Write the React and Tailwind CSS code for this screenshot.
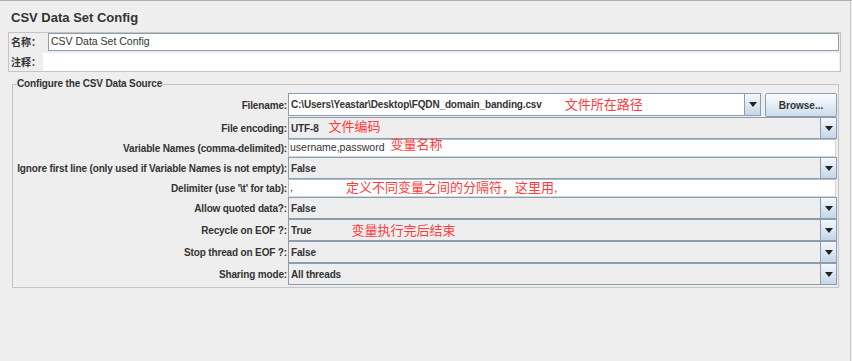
import React from "react";

const Arrow = () => (
  <svg width="8" height="5" viewBox="0 0 8 5" className="block">
    <path d="M0 0h8L4 5z" fill="#222" />
  </svg>
);

// dropdown button used on the right side of every combo
const DropButton = () => (
  <div className="w-[16px] h-full flex items-center justify-center border-l border-[#8c9db0] bg-gradient-to-b from-[#f4f8fc] to-[#c4d6e8]">
    <Arrow />
  </div>
);

const Combo = ({ value, note, noteClass = "" }) => (
  <div className="h-[22px] flex border border-[#8c9db0] bg-[#eeeeee]">
    <div className="flex-1 flex items-center pl-[2px] font-bold text-[10px] tracking-[-0.15px] text-[#333]">
      {value}
      {note && <span className={`font-normal text-[13px] tracking-normal text-[#ff3b3b] leading-none ${noteClass}`}>{note}</span>}
    </div>
    <DropButton />
  </div>
);

const TextField = ({ value, note, noteClass = "" }) => (
  <div className="h-[18px] mr-[1px] flex items-center bg-white border border-[#b3bdc8] border-r-[#d6d6d6] border-b-[#d6d6d6] pl-[1px] text-[10.5px] text-[#333]">
    {value}
    {note && <span className={`relative text-[13px] text-[#ff3b3b] leading-none ${noteClass}`}>{note}</span>}
  </div>
);

const Label = ({ children }) => (
  <div className="flex items-center justify-end pr-[1px] font-bold text-[10px] tracking-[-0.15px] text-[#333] whitespace-nowrap">
    {children}
  </div>
);

export default function App() {
  return (
    <div className="w-[852px] h-[361px] overflow-hidden bg-[#eeeeee] border-t border-[#a9b0b8] font-['Liberation_Sans','Noto_Sans_CJK_SC',sans-serif] text-[#333]">
      <div className="w-[851px] h-full border-r border-[#c9c9c9]">
        {/* Title */}
        <div className="pt-[9px] pl-[11px] text-[13px] leading-[16px] font-bold text-[#333]">
          CSV Data Set Config
        </div>

        {/* Name / comment box */}
        <div className="mt-[6px] ml-[8px] w-[833px] border border-[#c4c4c4]">
          <div className="h-[18px] flex">
            <div className="w-[39px] shrink-0 pl-[2px] flex items-center font-bold text-[10px] whitespace-nowrap">名称：</div>
            <div className="flex-1 mr-[1px] flex items-center bg-white border border-[#8c9db0] pl-[2px] text-[10.5px]">
              CSV Data Set Config
            </div>
          </div>
          <div className="h-[20px] flex pt-[2px]">
            <div className="w-[34px] shrink-0 pl-[2px] flex items-center font-bold text-[10px] whitespace-nowrap">注释：</div>
            <div className="flex-1 mr-[1px] bg-white"></div>
          </div>
        </div>

        {/* CSV data source fieldset */}
        <fieldset className="mt-[6px] ml-[12px] w-[827px] border border-[#c4c4c4] px-0 pt-[3px] pb-[2px]">
          <legend className="ml-[4px] font-bold text-[10px] leading-[12px] tracking-[-0.15px] text-[#333]">
            Configure the CSV Data Source
          </legend>
          <div className="grid grid-cols-[275px_549px]">
            <Label>Filename:</Label>
            <div className="h-[24px] flex">
              <div className="w-[473px] h-[23px] flex border border-[#8c9db0] bg-white">
                <div className="flex-1 flex items-center pl-[2px] font-bold text-[10px] tracking-[-0.15px]">
                  C:\Users\Yeastar\Desktop\FQDN_domain_banding.csv
                  <span className="ml-[23px] font-normal text-[13px] tracking-normal text-[#ff3b3b] leading-none">文件所在路径</span>
                </div>
                <DropButton />
              </div>
              <div className="ml-[4px] w-[72px] h-[24px] flex items-center justify-center border border-[#8c9db0] rounded-[2px] bg-gradient-to-b from-[#fbfdff] to-[#cddcec] font-bold text-[10px] text-[#333]">
                Browse...
              </div>
            </div>

            <Label>File encoding:</Label>
            <Combo value="UTF-8" note="文件编码" noteClass="ml-[10px] relative -top-[2px]" />

            <Label>Variable Names (comma-delimited):</Label>
            <TextField value="username,password" note="变量名称" noteClass="ml-[6px] -top-[4px]" />

            <Label>Ignore first line (only used if Variable Names is not empty):</Label>
            <Combo value="False" />

            <Label>Delimiter (use '\t' for tab):</Label>
            <TextField value="," note="定义不同变量之间的分隔符，这里用," noteClass="ml-[53px] -top-[1px]" />

            <Label>Allow quoted data?:</Label>
            <Combo value="False" />

            <Label>Recycle on EOF ?:</Label>
            <Combo value="True" note="变量执行完后结束" noteClass="ml-[40px]" />

            <Label>Stop thread on EOF ?:</Label>
            <Combo value="False" />

            <Label>Sharing mode:</Label>
            <Combo value="All threads" />
          </div>
        </fieldset>
      </div>
    </div>
  );
}
